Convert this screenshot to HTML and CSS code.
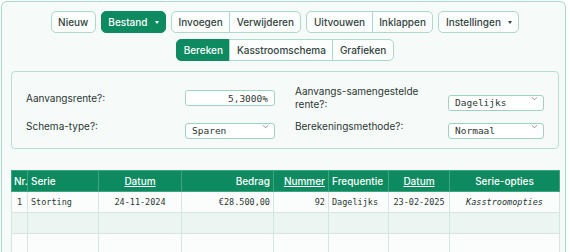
FILE: index.html
```html
<!DOCTYPE html>
<html lang="nl">
<head>
  <meta charset="UTF-8">
  <title>Kasstroom</title>
  <link rel="stylesheet" href="styles.css">
</head>
<body>
  <div class="container">
    <div class="toolbar">
      <div class="toolbar-row">
        <button class="btn">Nieuw</button>
        <button class="btn btn-primary">Bestand <span class="caret"></span></button>
        <div class="btn-group">
          <button class="btn">Invoegen</button>
          <button class="btn">Verwijderen</button>
        </div>
        <div class="btn-group">
          <button class="btn">Uitvouwen</button>
          <button class="btn">Inklappen</button>
        </div>
        <button class="btn">Instellingen <span class="caret dark"></span></button>
      </div>
      <div class="toolbar-row">
        <div class="btn-group">
          <button class="btn btn-primary">Bereken</button>
          <button class="btn">Kasstroomschema</button>
          <button class="btn">Grafieken</button>
        </div>
      </div>
    </div>

    <div class="panel">
      <label class="label">Aanvangsrente?:</label>
      <input class="field field-num" type="text" value="5,3000%">
      <label class="label label-right">Aanvangs-samengestelde rente?:</label>
      <span class="select-wrap">
        <select class="field">
          <option>Dagelijks</option>
        </select>
        <svg class="chevron" viewBox="0 0 8 5" width="7" height="5"><path d="M1 1l3 3 3-3" fill="none" stroke="#7d8b86" stroke-width="1"/></svg>
      </span>

      <label class="label">Schema-type?:</label>
      <span class="select-wrap">
        <select class="field">
          <option>Sparen</option>
        </select>
        <svg class="chevron" viewBox="0 0 8 5" width="7" height="5"><path d="M1 1l3 3 3-3" fill="none" stroke="#7d8b86" stroke-width="1"/></svg>
      </span>
      <label class="label label-right">Berekeningsmethode?:</label>
      <span class="select-wrap">
        <select class="field">
          <option>Normaal</option>
        </select>
        <svg class="chevron" viewBox="0 0 8 5" width="7" height="5"><path d="M1 1l3 3 3-3" fill="none" stroke="#7d8b86" stroke-width="1"/></svg>
      </span>
    </div>

    <table class="grid">
      <colgroup>
        <col class="c-nr"><col class="c-serie"><col class="c-datum"><col class="c-bedrag">
        <col class="c-nummer"><col class="c-freq"><col class="c-datum2"><col class="c-opties">
      </colgroup>
      <thead>
        <tr>
          <th class="left">Nr.</th>
          <th class="left">Serie</th>
          <th><a href="#">Datum</a></th>
          <th class="right">Bedrag</th>
          <th class="right"><a href="#">Nummer</a></th>
          <th class="left">Frequentie</th>
          <th><a href="#">Datum</a></th>
          <th>Serie-opties</th>
        </tr>
      </thead>
      <tbody>
        <tr>
          <td class="mid">1</td>
          <td class="left">Storting</td>
          <td>24-11-2024</td>
          <td class="right">€28.500,00</td>
          <td class="right">92</td>
          <td class="left">Dagelijks</td>
          <td>23-02-2025</td>
          <td class="opties">Kasstroomopties</td>
        </tr>
        <tr><td></td><td></td><td></td><td></td><td></td><td></td><td></td><td></td></tr>
        <tr><td></td><td></td><td></td><td></td><td></td><td></td><td></td><td></td></tr>
        <tr><td></td><td></td><td></td><td></td><td></td><td></td><td></td><td></td></tr>
      </tbody>
    </table>
  </div>
</body>
</html>
```

FILE: styles.css
```css
* {
  box-sizing: border-box;
}

body {
  margin: 0;
  background-color: #ffffff;
  font-family: 'Inter', 'Noto Sans', sans-serif;
  color: #2b3733;
  overflow: hidden;
}

.container {
  margin: 1px 4px 0 1px;
  padding: 9px 6px 0 9px;
  min-height: 300px;
  border: 1px solid #a9dccb;
  border-bottom: none;
  border-radius: 6px 6px 0 0;
  background-color: #f6fbfa;
}

.toolbar {
  display: flex;
  flex-direction: column;
  align-items: center;
  gap: 6px;
}

.toolbar-row {
  display: flex;
  gap: 5px;
}

.btn {
  height: 22px;
  padding: 0 6.5px;
  font-family: 'Inter', sans-serif;
  font-size: 10px;
  font-weight: 500;
  color: #34433e;
  background-color: #fbfefd;
  border: 1px solid #acd9c9;
  border-radius: 5px;
  display: flex;
  align-items: center;
  cursor: pointer;
}

.btn-primary {
  background-color: #0d8a60;
  border-color: #0d8a60;
  color: #ffffff;
}

.caret {
  display: inline-block;
  margin-left: 7px;
  border-left: 2.5px solid transparent;
  border-right: 2.5px solid transparent;
  border-top: 3px solid #ffffff;
}

.caret.dark {
  border-top-color: #34433e;
}

.btn-group {
  display: flex;
}

.btn-group .btn {
  border-radius: 0;
}

.btn-group .btn + .btn {
  margin-left: -1px;
}

.btn-group .btn:first-child {
  border-radius: 5px 0 0 5px;
}

.btn-group .btn:last-child {
  border-radius: 0 5px 5px 0;
}

.panel {
  margin-top: 10px;
  padding: 12px 14px 14px 14px;
  border: 1px solid #b3e0d1;
  border-radius: 4px;
  display: grid;
  grid-template-columns: 159px 90px 173px 96px;
  grid-template-rows: 28px 16px;
  row-gap: 6px;
  align-items: center;
}

.label {
  font-size: 10px;
  line-height: 13px;
  color: #2b3733;
}

.label-right {
  padding-left: 20px;
}

.field {
  width: 100%;
  height: 16px;
  padding: 0 6px;
  font-family: 'DejaVu Sans Mono', monospace;
  font-size: 9.5px;
  color: #2b3733;
  background-color: #ffffff;
  border: 1px solid #9fd3c1;
  border-radius: 3px;
  outline: none;
}

.field-num {
  text-align: right;
}

select.field {
  appearance: none;
  -webkit-appearance: none;
}

.select-wrap {
  position: relative;
  display: block;
  height: 16px;
}

.chevron {
  position: absolute;
  right: 6px;
  top: 6px;
  pointer-events: none;
}

.grid {
  margin-top: 21px;
  width: 548px;
  border-collapse: collapse;
  table-layout: fixed;
}

.c-nr { width: 16px; }
.c-serie { width: 71px; }
.c-datum { width: 83px; }
.c-bedrag { width: 92px; }
.c-nummer { width: 55px; }
.c-freq { width: 60px; }
.c-datum2 { width: 61px; }
.c-opties { width: 110px; }

.grid th {
  height: 21px;
  padding: 0 3px;
  font-size: 10px;
  font-weight: 500;
  color: #ffffff;
  background-color: #0d8a60;
  border: 1px solid #3fa580;
  text-align: center;
  white-space: nowrap;
}

.grid th:first-child {
  padding: 0 2px;
}

.grid th a {
  color: #ffffff;
}

.grid td {
  height: 21px;
  padding: 0 3px;
  font-family: 'DejaVu Sans Mono', monospace;
  font-size: 8.5px;
  color: #2b3733;
  border: 1px solid #d5e6e2;
  text-align: center;
  white-space: nowrap;
  background-color: #fbfdfd;
}

.grid tbody tr:nth-child(even) td {
  background-color: #edf5f3;
}

.grid .left { text-align: left; }
.grid .right { text-align: right; }
.grid .mid { text-align: center; }

.grid .opties {
  font-style: italic;
}
```
